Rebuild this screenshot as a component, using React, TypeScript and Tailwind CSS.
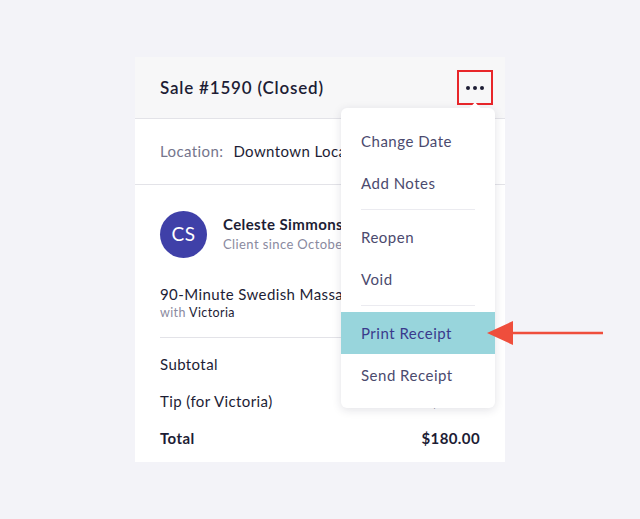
import { FC } from 'react';

const font = { fontFamily: 'Lato, "Noto Sans", sans-serif' };

const MenuItem: FC<{ label: string; active?: boolean }> = ({ label, active }) => (
  <div
    className={`h-[42px] flex items-center px-5 text-[15px] tracking-[0.5px] ${
      active ? 'bg-[#98d5dc] text-[#3a3a8c]' : 'text-[#4b4a6e]'
    }`}
  >
    {label}
  </div>
);

const Divider: FC = () => <div className="mx-5 mt-[5px] mb-[6px] h-px bg-[#ebebf0]" />;

export default function App() {
  return (
    <div className="w-[640px] h-[519px] bg-[#f3f3f8] pt-[57px] pl-[135px] overflow-hidden tracking-[0.4px]" style={font}>
      <div className="relative w-[370px] h-[405px] bg-white">
        {/* header */}
        <div className="h-[62px] bg-[#f7f7f8] border-b border-[#e3e3e8] flex items-center justify-between pl-[25px] pr-[12px]">
          <h1 className="text-[17px] font-semibold text-[#1d1d35] tracking-[0.8px]">Sale #1590 (Closed)</h1>
          <button className="w-[36px] h-[35px] border-2 border-[#e8262a] flex items-center justify-center gap-[3px]">
            <span className="w-[4px] h-[4px] rounded-full bg-[#1d1d35]" />
            <span className="w-[4px] h-[4px] rounded-full bg-[#1d1d35]" />
            <span className="w-[4px] h-[4px] rounded-full bg-[#1d1d35]" />
          </button>
        </div>

        {/* location */}
        <div className="h-[66px] border-b border-[#e3e3e8] flex items-center pl-[25px] text-[15px]">
          <span className="text-[#75758c]">Location:</span>
          <span className="ml-[10px] text-[#1d1d35]">Downtown Location</span>
        </div>

        {/* body */}
        <div className="px-[25px] pt-[26px]">
          <div className="flex items-center gap-[16px]">
            <div className="w-[47px] h-[47px] rounded-full bg-[#3f40a8] text-white flex items-center justify-center text-[19px]">
              CS
            </div>
            <div className="flex flex-col -mt-[2px]">
              <span className="text-[15px] font-bold text-[#1d1d35] leading-[20px]">Celeste Simmons</span>
              <span className="text-[13px] text-[#8a8aa0] leading-[20px]">Client since October 2019</span>
            </div>
          </div>

          <div className="mt-[26px]">
            <div className="text-[15px] text-[#1d1d35] leading-[20px]">90-Minute Swedish Massage</div>
            <div className="text-[12.5px] leading-[18px] text-[#1d1d35]">
              <span className="text-[#8a8aa0]">with</span> Victoria
            </div>
          </div>

          <div className="mt-[15px] h-px bg-[#e3e3e8]" />

          <div className="mt-[8px] text-[15px] text-[#1d1d35]">
            <div className="h-[37px] flex items-center justify-between">
              <span>Subtotal</span>
              <span>$160.00</span>
            </div>
            <div className="h-[37px] flex items-center justify-between">
              <span>Tip (for Victoria)</span>
              <span>$20.00</span>
            </div>
            <div className="h-[37px] flex items-center justify-between font-bold">
              <span>Total</span>
              <span>$180.00</span>
            </div>
          </div>
        </div>

        {/* dropdown menu */}
        <div className="absolute left-[206px] top-[51px] w-[154px] bg-white rounded-[6px] shadow-[0_2px_10px_rgba(30,30,60,0.13)] py-[12px]">
          <div className="absolute -top-[4px] right-[16px] w-[8px] h-[8px] bg-white rotate-45" />
          <MenuItem label="Change Date" />
          <MenuItem label="Add Notes" />
          <Divider />
          <MenuItem label="Reopen" />
          <MenuItem label="Void" />
          <Divider />
          <MenuItem label="Print Receipt" active />
          <MenuItem label="Send Receipt" />
        </div>

        {/* red pointer arrow */}
        <svg className="absolute left-[352px] top-[263px]" width="118" height="26" viewBox="0 0 118 26">
          <line x1="20" y1="13" x2="116" y2="13" stroke="#ef4e3c" strokeWidth="2.5" />
          <polygon points="0,13 26,1 26,25" fill="#ef4e3c" />
        </svg>
      </div>
    </div>
  );
}
